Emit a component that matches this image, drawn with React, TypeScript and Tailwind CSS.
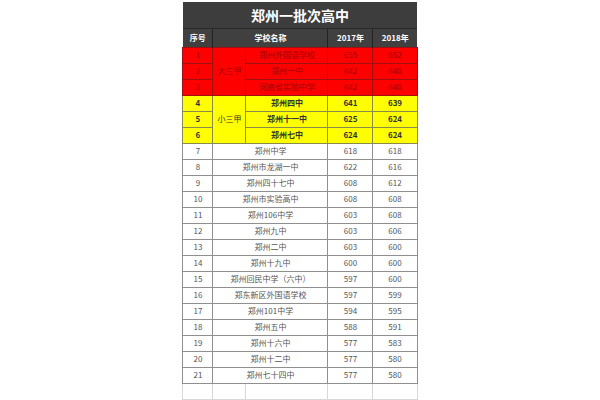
import React from "react";

const red = [
  ["1", "郑州外国语学校", "655", "652"],
  ["2", "郑州一中", "642", "640"],
  ["3", "河南省实验中学", "642", "640"],
];
const yellow = [
  ["4", "郑州四中", "641", "639"],
  ["5", "郑州十一中", "625", "624"],
  ["6", "郑州七中", "624", "624"],
];
const white = [
  ["7", "郑州中学", "618", "618"],
  ["8", "郑州市龙湖一中", "622", "616"],
  ["9", "郑州四十七中", "608", "612"],
  ["10", "郑州市实验高中", "608", "608"],
  ["11", "郑州106中学", "603", "608"],
  ["12", "郑州九中", "603", "606"],
  ["13", "郑州二中", "603", "600"],
  ["14", "郑州十九中", "600", "600"],
  ["15", "郑州回民中学（六中）", "597", "600"],
  ["16", "郑东新区外国语学校", "597", "599"],
  ["17", "郑州101中学", "594", "595"],
  ["18", "郑州五中", "588", "591"],
  ["19", "郑州十六中", "577", "583"],
  ["20", "郑州十二中", "577", "580"],
  ["21", "郑州七十四中", "577", "580"],
];

const font = { fontFamily: '"Noto Sans CJK SC", "Noto Sans", sans-serif' };

export default function App() {
  return (
    <div className="w-[600px] h-[400px] bg-white flex justify-center pt-[2px] overflow-hidden" style={font}>
      <table className="table-fixed border-collapse w-[234px] h-fit text-[8px] leading-none text-center">
        <colgroup>
          <col className="w-[30px]" />
          <col className="w-[33px]" />
          <col className="w-[82px]" />
          <col className="w-[45px]" />
          <col className="w-[44px]" />
        </colgroup>
        <tbody>
          <tr className="h-[26px] bg-[#3d3d3d]">
            <td colSpan={5} className="text-white font-bold text-[14px] border-b border-[#2a2a2a]">
              郑州一批次高中
            </td>
          </tr>
          <tr className="h-[19px] bg-[#404040] text-white font-bold">
            <td className="border-r border-[#222]">序号</td>
            <td colSpan={2} className="border-r border-[#222]">学校名称</td>
            <td className="border-r border-[#222]">2017年</td>
            <td>2018年</td>
          </tr>
          {red.map((r, i) => (
            <tr key={r[0]} className="h-[16px] bg-[#fe0000] text-[#a00000]">
              <td className="border border-[#a01010]">{r[0]}</td>
              {i === 0 && (
                <td rowSpan={3} className="border border-[#a01010]">大三甲</td>
              )}
              <td className="border border-[#a01010]">{r[1]}</td>
              <td className="border border-[#a01010]">{r[2]}</td>
              <td className="border border-[#a01010]">{r[3]}</td>
            </tr>
          ))}
          {yellow.map((r, i) => (
            <tr key={r[0]} className="h-[16px] bg-[#ffff00] text-[#333] font-semibold">
              <td className="border border-[#8a8a4a]">{r[0]}</td>
              {i === 0 && (
                <td rowSpan={3} className="border border-[#8a8a4a] font-normal">小三甲</td>
              )}
              <td className="border border-[#8a8a4a]">{r[1]}</td>
              <td className="border border-[#8a8a4a]">{r[2]}</td>
              <td className="border border-[#8a8a4a]">{r[3]}</td>
            </tr>
          ))}
          {white.map((r) => (
            <tr key={r[0]} className="h-[16px] bg-white text-[#555]">
              <td className="border border-[#8f8f8f]">{r[0]}</td>
              <td colSpan={2} className="border border-[#8f8f8f]">{r[1]}</td>
              <td className="border border-[#8f8f8f]">{r[2]}</td>
              <td className="border border-[#8f8f8f]">{r[3]}</td>
            </tr>
          ))}
          <tr className="h-[16px] bg-white">
            <td className="border border-[#d8d8d8] border-t-[#8f8f8f]"></td>
            <td className="border border-[#d8d8d8] border-t-[#8f8f8f]"></td>
            <td className="border border-[#d8d8d8] border-t-[#8f8f8f]"></td>
            <td className="border border-[#d8d8d8] border-t-[#8f8f8f]"></td>
            <td className="border border-[#d8d8d8] border-t-[#8f8f8f]"></td>
          </tr>
        </tbody>
      </table>
    </div>
  );
}
